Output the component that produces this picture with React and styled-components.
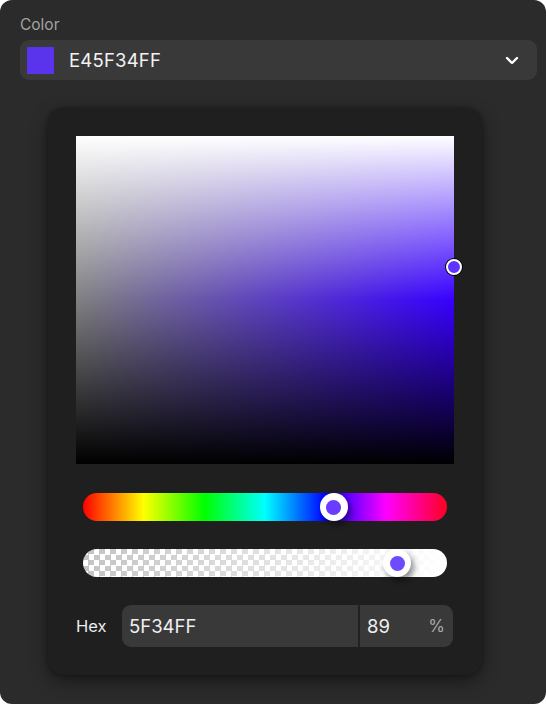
import React from 'react'
import styled, { createGlobalStyle } from 'styled-components'

const Global = createGlobalStyle`
  html, body { margin: 0; padding: 0; background: #ffffff; }
  body { font-family: Inter, "Noto Sans", "Liberation Sans", sans-serif; }
`

const Panel = styled.div`
  width: 546px;
  height: 704px;
  box-sizing: border-box;
  background: #2b2b2b;
  border-radius: 12px;
  padding: 16px 9px 0 20px;
  display: flex;
  flex-direction: column;
`

const Label = styled.div`
  font-size: 15.5px;
  line-height: 18px;
  color: #a3a3a3;
  margin-bottom: 6px;
`

const Select = styled.div`
  height: 40px;
  border-radius: 9px;
  background: #393939;
  display: flex;
  align-items: center;
  padding: 0 18px 0 7px;
  gap: 15px;
`

const Swatch = styled.div`
  width: 27px;
  height: 27px;
  background: ${p => p.color};
`

const SelectText = styled.span`
  flex: 1;
  font-size: 18.5px;
  color: #f2f2f2;
  letter-spacing: 0.2px;
`

const Popover = styled.div`
  margin: 28px 0 0 28px;
  width: 434px;
  box-sizing: border-box;
  padding: 28px 28px 28px;
  background: #1f1f1f;
  border-radius: 16px;
  box-shadow: 0 6px 18px rgba(0, 0, 0, 0.45), 0 0 4px rgba(0, 0, 0, 0.3);
  display: flex;
  flex-direction: column;
  gap: 28px;
`

const SVArea = styled.div`
  position: relative;
  width: 378px;
  height: 328px;
  margin-bottom: 1px;
  background:
    linear-gradient(to bottom, #ffffff 0%, rgba(255,255,255,0) 50%, rgba(0,0,0,0) 50%, #000000 100%),
    linear-gradient(to right, #808080, hsl(${p => p.hue}, 100%, 50%));
`

const SVHandle = styled.div`
  position: absolute;
  width: 12px;
  height: 12px;
  border-radius: 50%;
  background: ${p => p.color};
  border: 2px solid #ffffff;
  box-shadow: 0 0 0 1px #000000;
  transform: translate(-50%, -50%);
`

const Track = styled.div`
  position: relative;
  height: 28px;
  margin: 0 7px;
  border-radius: 14px;
  background: ${p => p.bg};
  background-size: ${p => p.size || 'auto'};
`

const Thumb = styled.div`
  position: absolute;
  top: 50%;
  width: 28px;
  height: 28px;
  border-radius: 50%;
  background: #ffffff;
  transform: translate(-50%, -50%);
  box-shadow: 3px 4px 6px rgba(0, 0, 0, 0.45);
  display: flex;
  align-items: center;
  justify-content: center;

  &::after {
    content: '';
    width: 15px;
    height: 15px;
    border-radius: 50%;
    background: ${p => p.dot};
  }
`

const HexRow = styled.div`
  display: flex;
  align-items: center;
  height: 42px;
`

const HexLabel = styled.span`
  width: 46px;
  font-size: 16.5px;
  color: #ececec;
`

const Field = styled.div`
  flex: 1;
  height: 42px;
  margin-right: 1px;
  display: flex;
  border-radius: 9px;
  overflow: hidden;
  background: #393939;
`

const Cell = styled.div`
  width: ${p => p.w}px;
  box-sizing: border-box;
  display: flex;
  align-items: center;
  padding: 0 8px 0 ${p => p.pl}px;
  font-size: 18.5px;
  color: #f0f0f0;
  border-left: ${p => (p.divided ? '2px solid #222222' : 'none')};
`

const Unit = styled.span`
  margin-left: auto;
  font-size: 17px;
  color: #a8a8a8;
`

const Chevron = () => (
  <svg width="14" height="9" viewBox="0 0 14 9" fill="none">
    <path d="M2 2l5 5 5-5" stroke="#ffffff" strokeWidth="2.4" strokeLinecap="round" strokeLinejoin="round" />
  </svg>
)

const checker =
  'linear-gradient(to right, rgba(255,255,255,0) 0%, #ffffff 100%), ' +
  'repeating-conic-gradient(#c4c4c4 0% 25%, #ffffff 0% 50%)'

export default function App() {
  const hue = 253
  const color = '#5F34FF'
  const alpha = 89

  const hueTrack = `linear-gradient(to right, #ff0000 0%, #ffff00 16.67%, #00ff00 33.33%, #00ffff 50%, #0000ff 66.67%, #ff00ff 83.33%, #ff0022 100%)`

  return (
    <>
      <Global />
      <Panel>
        <Label>Color</Label>
        <Select>
          <Swatch color="#5a34ec" />
          <SelectText>E45F34FF</SelectText>
          <Chevron />
        </Select>

        <Popover>
          <SVArea hue={hue}>
            <SVHandle color={color} style={{ left: '100%', top: '39.8%' }} />
          </SVArea>

          <Track bg={hueTrack}>
            <Thumb dot="#6a3cff" style={{ left: `${(hue / 360) * 100 - 1.4}%` }} />
          </Track>

          <Track bg={checker} size="100% 100%, 11px 11px">
            <Thumb dot="#6e4bff" style={{ left: `${alpha - 2.7}%` }} />
          </Track>

          <HexRow>
            <HexLabel>Hex</HexLabel>
            <Field>
              <Cell w={236} pl={7}>5F34FF</Cell>
              <Cell w={95} pl={7} divided>
                {alpha}
                <Unit>%</Unit>
              </Cell>
            </Field>
          </HexRow>
        </Popover>
      </Panel>
    </>
  )
}
